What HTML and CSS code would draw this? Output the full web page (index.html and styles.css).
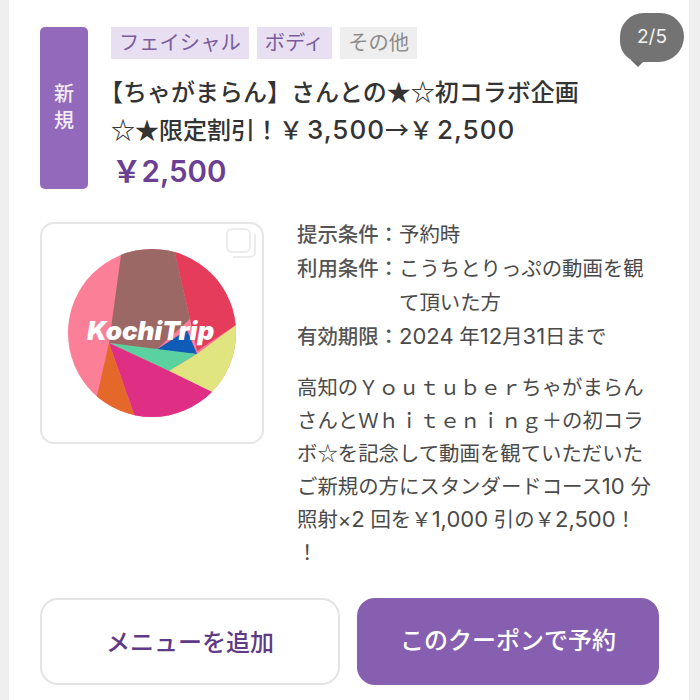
FILE: index.html
```html
<!DOCTYPE html>
<html lang="ja">
<head>
  <meta charset="UTF-8" />
  <title>クーポン</title>
  <link rel="stylesheet" href="styles.css">
</head>
<body>

<div class="card">
  <span class="pager">2/5</span>

  <!-- Header -->
  <div class="head">
    <div class="new-badge"><span>新</span><span>規</span></div>
    <div class="head-main">
      <div class="tags">
        <span class="tag">フェイシャル</span>
        <span class="tag">ボディ</span>
        <span class="tag tag-other">その他</span>
      </div>
      <h2 class="title">【ちゃがまらん】さんとの<span class="sym">★☆</span>初コラボ企画<br><span class="sym">☆★</span>限定割引！￥<span class="num">3,500</span><span class="sym">→</span>￥<span class="num">2,500</span></h2>
      <div class="price">￥2,500</div>
    </div>
  </div>

  <!-- Body -->
  <div class="content">
    <div class="photo">
      <svg class="logo" viewBox="0 0 168 168" width="168" height="168">
        <defs>
          <clipPath id="disc"><circle cx="84" cy="84" r="84"/></clipPath>
        </defs>
        <g clip-path="url(#disc)">
          <rect width="168" height="168" fill="#fb7f96"/>
          <polygon points="53,6 53,0 106,0 122,70 88,101 41,94" fill="#9c6866"/>
          <polygon points="106,0 168,0 168,76 129,102 122,70" fill="#e63c5b"/>
          <polygon points="88,101 119,81 129,105" fill="#0e5bb8"/>
          <polygon points="41,94 129,105 101,122" fill="#5bd1a0"/>
          <polygon points="168,76 168,168 144,143 101,122 129,105" fill="#e0e580"/>
          <polygon points="41,94 101,122 144,143 144,168 67,168" fill="#de2f84"/>
          <polygon points="41,94 67,168 29,168 29,147" fill="#e3682a"/>
        </g>
        <text class="logo-text" x="19" y="91">KochiTrip</text>
      </svg>
      <svg class="stack-icon" viewBox="0 0 32 32" width="32" height="32">
        <rect x="1" y="1" width="23" height="23" rx="5" fill="none" stroke="#ececec" stroke-width="2"/>
        <path d="M29 6v18a5 5 0 0 1-5 5H7" fill="none" stroke="#ececec" stroke-width="2"/>
      </svg>
    </div>

    <div class="info">
      <dl class="terms">
        <div class="term"><dt>提示条件：</dt><dd>予約時</dd></div>
        <div class="term"><dt>利用条件：</dt><dd>こうちとりっぷの動画を観て頂いた方</dd></div>
        <div class="term"><dt>有効期限：</dt><dd><span class="num">2024</span> 年<span class="num">12</span>月<span class="num">31</span>日まで</dd></div>
      </dl>
      <p class="desc">高知のＹｏｕｔｕｂｅｒちゃがまらん<br>さんとＷｈｉｔｅｎｉｎｇ＋の初コラ<br>ボ<span class="sym">☆</span>を記念して動画を観ていただいた<br>ご新規の方にスタンダードコース<span class="num">10</span> 分<br>照射×<span class="num">2</span> 回を￥<span class="num">1,000</span> 引の￥<span class="num">2,500</span>！<br>！</p>
    </div>
  </div>

  <!-- Buttons -->
  <div class="actions">
    <a class="btn btn-outline">メニューを追加</a>
    <a class="btn btn-primary">このクーポンで予約</a>
  </div>
</div>

</body>
</html>
```

FILE: styles.css
```css
body, html {
  margin: 0;
  height: 700px;
  overflow: hidden;
  background: #efefef;
  font-family: "Inter", "Noto Sans CJK JP", sans-serif;
  color: #3a3a3a;
}

.card {
  position: relative;
  isolation: isolate;
  box-sizing: border-box;
  width: 680px;
  height: 700px;
  margin-left: 9px;
  padding: 27px 30px 0 31px;
  background: #ffffff;
}

.sym {
  font-family: "Noto Sans CJK JP", sans-serif;
  line-height: 1;
}

.num {
  font-size: 1.08em;
  line-height: 1;
}

.pager {
  position: absolute;
  top: 13px;
  right: 5px;
  width: 64px;
  height: 49px;
  border-radius: 25px 25px 27px 22px;
  background: #737373;
  color: #f4f4f4;
  font-size: 19px;
  line-height: 47px;
  text-align: center;
}

.pager::after {
  content: "";
  position: absolute;
  left: 13px;
  bottom: -3px;
  width: 10px;
  height: 10px;
  background: #6b6b6b;
  transform: rotate(45deg);
  z-index: -1;
}

.head {
  display: flex;
  gap: 23px;
  height: 162px;
}

.new-badge {
  display: flex;
  flex-direction: column;
  justify-content: center;
  align-items: center;
  width: 48px;
  height: 162px;
  flex-shrink: 0;
  border-radius: 5px;
  background: #9369bb;
  color: #f3edf8;
  font-size: 20px;
  font-weight: 500;
  line-height: 27px;
}

.tags {
  display: flex;
  gap: 8px;
}

.tag {
  padding: 0 8px;
  height: 32px;
  line-height: 32px;
  background: #e8e0f2;
  color: #7a5d9c;
  font-size: 20.3px;
}

.tag-other {
  background: #eeeeee;
  color: #8c8c8c;
}

.title {
  margin: 15px 0 0;
  font-size: 24px;
  font-weight: 500;
  line-height: 38px;
  text-indent: -12px;
  color: #333333;
  white-space: nowrap;
}

.title .num {
  margin-left: 4px;
  font-size: 26px;
  letter-spacing: 1px;
}

.price {
  margin-top: 1px;
  margin-left: 1px;
  color: #6b3f92;
  font-size: 29.5px;
  font-weight: 600;
  line-height: 40px;
}

.content {
  display: flex;
  gap: 33px;
  height: 349px;
  margin-top: 33px;
}

.photo {
  position: relative;
  display: flex;
  justify-content: center;
  align-items: center;
  box-sizing: border-box;
  width: 224px;
  height: 222px;
  flex-shrink: 0;
  border: 2px solid #e6e6e6;
  border-radius: 14px;
}

.logo-text {
  font-family: "Inter", sans-serif;
  font-size: 26px;
  font-weight: 900;
  font-style: italic;
  fill: #ffffff;
}

.stack-icon {
  position: absolute;
  top: 4px;
  right: 4px;
}

.info {
  width: 358px;
  margin-top: -4px;
  font-size: 20.4px;
  line-height: 34px;
  color: #4a4a4a;
}

.terms {
  margin: 0;
}

.term {
  display: flex;
}

.term dt {
  width: 102px;
  flex-shrink: 0;
  font-weight: 500;
  color: #555555;
}

.term dd {
  margin: 0;
  width: 250px;
}

.desc {
  margin: 17px 0 0;
  line-height: 33px;
  white-space: nowrap;
}

.actions {
  display: flex;
  gap: 17px;
  margin-top: 27px;
}

.btn {
  box-sizing: border-box;
  height: 87px;
  border-radius: 18px;
  font-size: 24px;
  font-weight: 500;
  line-height: 85px;
  text-align: center;
}

.btn-outline {
  width: 300px;
  border: 2px solid #e4e4e4;
  color: #5f3a86;
}

.btn-primary {
  width: 302px;
  background: #875fb1;
  color: #ffffff;
}
```
